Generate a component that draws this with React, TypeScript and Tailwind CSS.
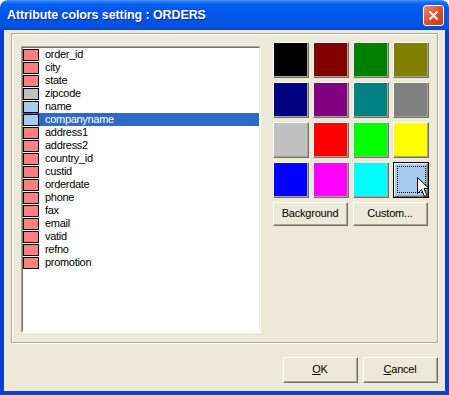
const fields: [string, string][] = [
  ['order_id', 'bg-[#ff8080]'],
  ['city', 'bg-[#ff8080]'],
  ['state', 'bg-[#ff8080]'],
  ['zipcode', 'bg-[#c0c0c0]'],
  ['name', 'bg-[#a6caf0]'],
  ['companyname', 'bg-[#a6caf0]'],
  ['address1', 'bg-[#ff8080]'],
  ['address2', 'bg-[#ff8080]'],
  ['country_id', 'bg-[#ff8080]'],
  ['custid', 'bg-[#ff8080]'],
  ['orderdate', 'bg-[#ff8080]'],
  ['phone', 'bg-[#ff8080]'],
  ['fax', 'bg-[#ff8080]'],
  ['email', 'bg-[#ff8080]'],
  ['vatid', 'bg-[#ff8080]'],
  ['refno', 'bg-[#ff8080]'],
  ['promotion', 'bg-[#ff8080]'],
];

const palette = [
  'bg-[#000000]', 'bg-[#800000]', 'bg-[#008000]', 'bg-[#808000]',
  'bg-[#000080]', 'bg-[#800080]', 'bg-[#008080]', 'bg-[#808080]',
  'bg-[#c0c0c0]', 'bg-[#ff0000]', 'bg-[#00ff00]', 'bg-[#ffff00]',
  'bg-[#0000ff]', 'bg-[#ff00ff]', 'bg-[#00ffff]', 'bg-[#a6caf0]',
];

const Button = ({ children, w, h }: { children: React.ReactNode; w: string; h: string }) => (
  <div className={`${w} ${h} border border-t-white border-l-white border-r-[#716f64] border-b-[#716f64] bg-[#ece9d8]`}>
    <div className="w-full h-full flex items-center justify-center border-r border-b border-[#aca899] text-[11px] text-black tracking-[-0.2px]">
      {children}
    </div>
  </div>
);

const Cursor = () => (
  <svg className="absolute left-[23px] top-[14px]" width="13" height="21" viewBox="0 0 13 21">
    <path d="M0.5 0.5 L0.5 16.5 L4.5 12.5 L7.5 19.5 L10 18.5 L7 11.5 L12 11.5 Z" fill="#fff" stroke="#000" strokeWidth="1" />
  </svg>
);

const Swatch = ({ color, active }: { color: string; active?: boolean }) => (
  <div className={`relative w-[36px] h-[36px] ${active ? 'border border-black' : ''}`}>
    <div className="w-full h-full border border-t-white border-l-white border-r-[#716f64] border-b-[#716f64]">
      <div className={`w-full h-full border-r border-b border-[#aca899] ${color}`} />
    </div>
    {active && (
      <>
        <div className="absolute left-[3px] top-[3px] right-[2px] bottom-[4px] border border-dotted border-black" />
        <Cursor />
      </>
    )}
  </div>
);

export default function App() {
  return (
    <div className="w-[449px] h-[395px] flex flex-col font-['Liberation_Sans',Arial,sans-serif] bg-white">
      <div className="h-[30px] shrink-0 flex items-center pl-[7px] pr-[5px] rounded-t-[8px] bg-[linear-gradient(180deg,#4a95fb_0px,#1f72f5_2px,#0862f0_4px,#0058ee_10px,#0054e6_20px,#0050dd_27px,#0046cc_30px)]">
        <span className="text-white font-bold text-[12.5px] tracking-[-0.1px] [text-shadow:1px_1px_#0a2a9a]">
          Attribute colors setting : ORDERS
        </span>
        <div className="ml-auto w-[21px] h-[21px] rounded-[3px] border border-white bg-[linear-gradient(135deg,#f08a6c,#e0502e_50%,#c8381a)] flex items-center justify-center">
          <svg width="11" height="11" viewBox="0 0 11 11">
            <path d="M1.5 1.5 L9.5 9.5 M9.5 1.5 L1.5 9.5" stroke="#fff" strokeWidth="2" />
          </svg>
        </div>
      </div>

      <div className="flex-1 flex flex-col bg-[#ece9d8] border-x-4 border-b-4 border-[#0a3fd0] pt-[3px] px-[7px] pb-[8px]">
        <div className="h-[310px] flex items-start pl-[9px] border border-[#aca899] shadow-[inset_1px_1px_0_#fff,1px_1px_0_#fff]">
          <div className="mt-[12px] w-[240px] h-[287px] border border-t-[#aca899] border-l-[#aca899] border-r-white border-b-white">
            <div className="w-full h-full bg-white border border-t-[#716f64] border-l-[#716f64] border-r-[#f1efe2] border-b-[#f1efe2]">
              {fields.map(([name, color], i) => {
                const selected = i === 5;
                return (
                  <div key={name} className={`h-[13px] flex items-center ${selected ? 'bg-[#316ac5] text-white' : 'text-black'}`}>
                    <div className={`w-[16px] h-[12px] border border-black ${color}`} />
                    <span className="ml-[6px] text-[11px] leading-[13px] tracking-[-0.3px]">{name}</span>
                  </div>
                );
              })}
            </div>
          </div>

          <div className="ml-[12px] mt-[8px]">
            <div className="grid grid-cols-4 gap-[4px]">
              {palette.map((c, i) => (
                <Swatch key={c} color={c} active={i === 15} />
              ))}
            </div>
            <div className="mt-[4px] flex gap-[5px]">
              <Button w="w-[75px]" h="h-[24px]">Background</Button>
              <Button w="w-[75px]" h="h-[24px]">Custom...</Button>
            </div>
          </div>
        </div>

        <div className="mt-[14px] flex justify-end gap-[5px]">
          <Button w="w-[75px]" h="h-[26px]">
            <span><span className="underline">O</span>K</span>
          </Button>
          <Button w="w-[75px]" h="h-[26px]">
            <span><span className="underline">C</span>ancel</span>
          </Button>
        </div>
      </div>
    </div>
  );
}
